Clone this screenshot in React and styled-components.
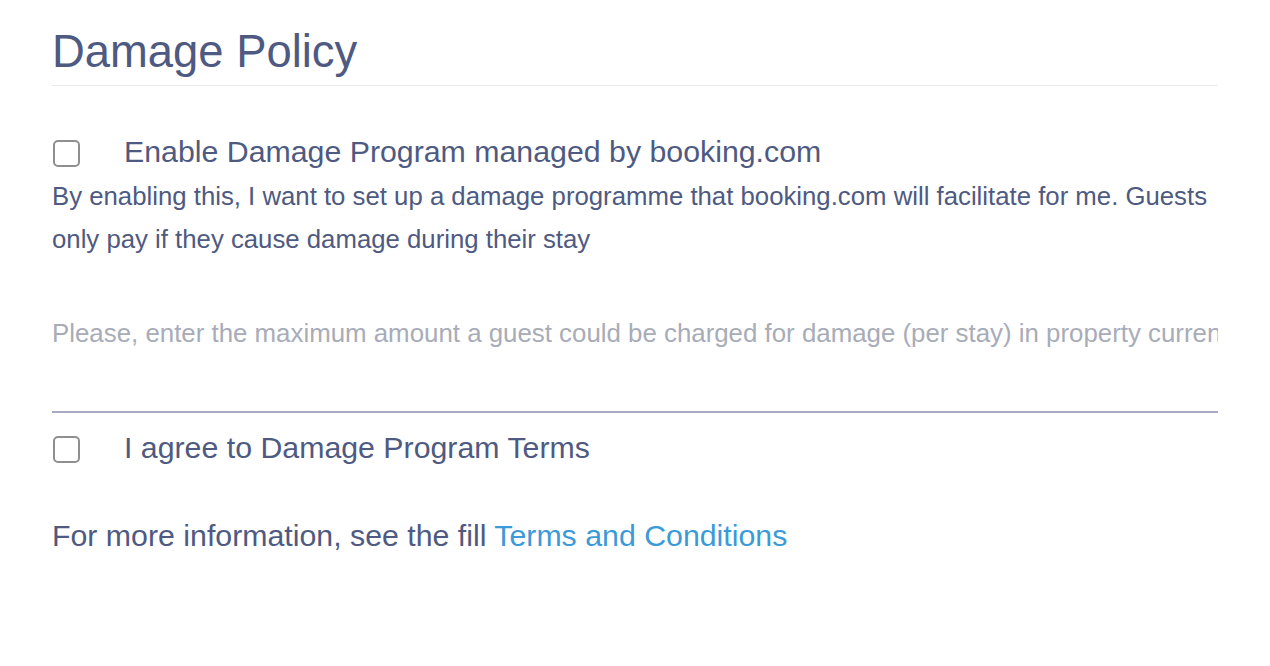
import React from "react";
import styled, { createGlobalStyle } from "styled-components";

const GlobalStyle = createGlobalStyle`
  html, body {
    margin: 0;
    padding: 0;
    background: #ffffff;
  }
  body {
    font-family: "Liberation Sans", Arial, Helvetica, sans-serif;
    color: #4e5a82;
  }
`;

const Page = styled.div`
  width: 1166px;
  padding: 26px 0 0 52px;
  display: flex;
  flex-direction: column;
`;

const Title = styled.h1`
  margin: 0;
  font-size: 45.4px;
  line-height: 52px;
  font-weight: 400;
  color: #4e5a82;
`;

const Divider = styled.div`
  height: 1px;
  background: #e9e9ec;
  margin-top: 7px;
`;

const CheckRow = styled.label`
  display: flex;
  align-items: center;
  gap: 44px;
  margin-top: ${(p) => p.$top}px;
  font-size: 30.3px;
  line-height: 36px;
  color: #4e5a82;
  cursor: pointer;
`;

const Box = styled.input.attrs({ type: "checkbox" })`
  appearance: none;
  -webkit-appearance: none;
  margin: 2px 0 0 1px;
  width: 27px;
  height: 27px;
  box-sizing: border-box;
  border: 2px solid #8f8f8f;
  border-radius: 5px;
  background: #fff;
  flex: none;
`;

const Description = styled.p`
  margin: 5px 0 0;
  font-size: 25.75px;
  line-height: 43px;
  color: #4e5a82;
`;

const Field = styled.div`
  margin-top: 57px;
  display: flex;
  flex-direction: column;
`;

const FieldLabel = styled.label`
  font-size: 25.85px;
  line-height: 30px;
  color: #a8acb8;
  white-space: nowrap;
  overflow: hidden;
`;

const TextInput = styled.input`
  display: block;
  width: 100%;
  box-sizing: border-box;
  height: 65px;
  border: none;
  border-bottom: 2px solid #a9abc6;
  outline: none;
  background: transparent;
  font-family: inherit;
  font-size: 25.6px;
  color: #4e5a82;
  padding: 0;
`;

const Info = styled.p`
  margin: 52px 0 0;
  font-size: 30.3px;
  line-height: 36px;
  color: #4e5a82;
`;

const Link = styled.a`
  color: #3b9ad8;
  text-decoration: none;
`;

export default function App() {
  return (
    <>
      <GlobalStyle />
      <Page>
        <Title>Damage Policy</Title>
        <Divider />
        <CheckRow $top={48}>
          <Box />
          <span>Enable Damage Program managed by booking.com</span>
        </CheckRow>
        <Description>
          By enabling this, I want to set up a damage programme that booking.com
          will facilitate for me. Guests only pay if they cause damage during their stay
        </Description>
        <Field>
          <FieldLabel htmlFor="damage-amount">
            Please, enter the maximum amount a guest could be charged for damage (per stay) in property currency
          </FieldLabel>
          <TextInput id="damage-amount" />
        </Field>
        <CheckRow $top={17}>
          <Box />
          <span>I agree to Damage Program Terms</span>
        </CheckRow>
        <Info>
          For more information, see the fill <Link href="#">Terms and Conditions</Link>
        </Info>
      </Page>
    </>
  );
}
